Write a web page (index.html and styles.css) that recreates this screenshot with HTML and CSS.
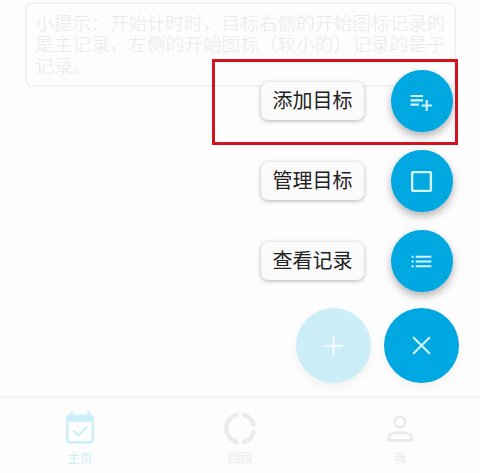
FILE: index.html
```html
<!DOCTYPE html>
<html lang="zh-CN">
<head>
<meta charset="utf-8">
<title>主页</title>
<link rel="stylesheet" href="styles.css">
</head>
<body>
<main class="content">
  <section class="tip">小提示：开始计时时，目标右侧的开始图标记录的<br>是主记录，左侧的开始图标（较小的）记录的是子<br>记录。</section>
</main>
<nav class="tabs">
  <a class="tab tab-active">
    <svg class="tab-icon" viewBox="0 0 36 36"><path d="M8 5.500H28Q32 5.500 32 9.500V30.500Q32 34.500 28 34.500H8Q4 34.500 4 30.500V9.500Q4 5.500 8 5.500ZM6.500 13V30Q6.500 32 8.500 32H27.500Q29.500 32 29.500 30V13Z" fill="currentColor" fill-rule="evenodd"/><path d="M10 3.500V7M26.500 3.500V7" stroke="currentColor" stroke-width="2.500" stroke-linecap="round"/><path d="M11.500 22L16.500 26.500L25 17.500" fill="none" stroke="currentColor" stroke-width="2"/></svg>
    <span>主页</span>
  </a>
  <a class="tab">
    <svg class="tab-icon" viewBox="0 0 36 36"><g fill="none" stroke="currentColor" stroke-width="4.500" stroke-linecap="round"><path d="M14.600 6A14 14 0 0 0 14.600 33"/><path d="M22 6A14 14 0 0 1 31.500 15.500"/><path d="M31.500 23.500A14 14 0 0 1 22 33"/></g></svg>
    <span>回顾</span>
  </a>
  <a class="tab">
    <svg class="tab-icon" viewBox="0 0 36 36"><g fill="none" stroke="currentColor" stroke-width="2.800"><circle cx="18" cy="13" r="5.200"/><path d="M6.500 31.500V29C6.500 25 13 23.400 18 23.400S29.800 25 29.800 29V31.500Z" stroke-linejoin="round"/></g></svg>
    <span>我</span>
  </a>
</nav>
<div class="actions">
  <div class="action">
    <span class="label">添加目标</span>
    <button class="mini"><svg class="icon" viewBox="0 0 24 24"><path d="M1.500 6.700H13.500M1.500 10.900H13.500M1.500 15H9.500M17 10.500V21M12 15.800H22.200" stroke="currentColor" stroke-width="2"/></svg></button>
  </div>
  <div class="action">
    <span class="label">管理目标</span>
    <button class="mini"><svg class="icon" viewBox="0 0 24 24"><rect x="3" y="3" width="18" height="18" rx=".8" fill="none" stroke="currentColor" stroke-width="2.300"/></svg></button>
  </div>
  <div class="action">
    <span class="label">查看记录</span>
    <button class="mini"><svg class="icon" viewBox="0 0 24 24"><path d="M2.500 7.500H4.500M6.500 7.500H21.500M2.500 12H4.500M6.500 12H21.500M2.500 16.500H4.500M6.500 16.500H21.500" stroke="currentColor" stroke-width="2"/></svg></button>
  </div>
  <div class="main-actions">
    <button class="fab faded"><svg class="fab-icon" viewBox="0 0 24 24"><path d="M12 4V20.500M3.700 12.200H20.300" stroke="currentColor" stroke-width="2" stroke-linecap="round"/></svg></button>
    <button class="fab"><svg class="fab-icon" viewBox="0 0 24 24"><path d="M4.500 4.500L19.500 19.500M19.500 4.500L4.500 19.500" stroke="currentColor" stroke-width="2" stroke-linecap="round"/></svg></button>
  </div>
</div>
<div class="highlight"></div>
</body>
</html>
```
FILE: styles.css
```css
* {
  box-sizing: border-box;
}

body {
  position: relative;
  display: flex;
  flex-direction: column;
  width: 480px;
  height: 473px;
  margin: 0;
  overflow: hidden;
  background: #fdfdfd;
  font-family: "Noto Sans CJK SC", sans-serif;
}

.content {
  flex: 1;
  padding: 2px 24px 0 25px;
}

.tip {
  height: 85px;
  padding: 7px 0 0 8px;
  border: 2px solid #f2f2f2;
  border-radius: 7px;
  color: #e9e9e9;
  font-size: 18.67px;
  font-weight: 300;
  line-height: 21.3px;
  white-space: nowrap;
}

.tabs {
  display: grid;
  grid-template-columns: repeat(3, 1fr);
  height: 77px;
  border-top: 2px solid #f6f6f6;
}

.tab {
  display: flex;
  flex-direction: column;
  align-items: center;
  padding-top: 11px;
  color: #ebebeb;
  font-size: 12.5px;
  line-height: 18px;
}

.tab-active {
  color: #cceef9;
}

.tab-icon {
  width: 36px;
  height: 36px;
  margin-bottom: 4px;
  overflow: visible;
}

.actions {
  position: absolute;
  top: 61px;
  right: 21px;
}

.action {
  display: flex;
  align-items: center;
  justify-content: flex-end;
  gap: 27px;
  height: 80px;
  padding-right: 6.5px;
}

.label {
  width: 103px;
  height: 38px;
  border-radius: 7px;
  background: #fafafa;
  box-shadow: 0 1px 4px rgba(0, 0, 0, .3);
  color: #222;
  font-size: 20px;
  line-height: 36px;
  text-align: center;
}

.mini,
.fab {
  display: flex;
  align-items: center;
  justify-content: center;
  padding: 0;
  border: 0;
  border-radius: 50%;
  background: #00a8e1;
  color: #d3f3fd;
}

.mini {
  width: 61.5px;
  height: 61.5px;
  box-shadow: 0 4px 8px rgba(0, 0, 0, .3);
}

.icon {
  width: 25px;
  height: 25px;
}

.main-actions {
  display: flex;
  justify-content: flex-end;
  gap: 13px;
  padding-top: 7px;
}

.fab {
  width: 75px;
  height: 75px;
  box-shadow: 0 4px 10px rgba(0, 0, 0, .05);
}

.faded {
  background: #cceef9;
  color: #f8fdff;
}

.fab-icon {
  width: 25px;
  height: 25px;
}

.highlight {
  position: absolute;
  top: 59px;
  left: 212px;
  width: 246px;
  height: 86px;
  border: 3px solid #d3131d;
  pointer-events: none;
}
```
